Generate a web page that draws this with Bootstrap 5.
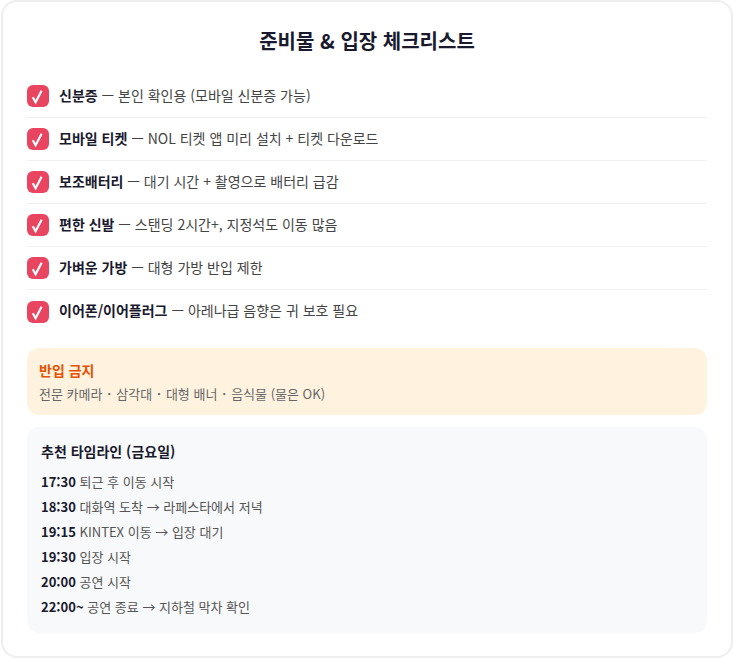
<!DOCTYPE html>
<html lang="ko"><head><meta charset="utf-8">
<link href="https://cdn.jsdelivr.net/npm/bootstrap@5.3.0/dist/css/bootstrap.min.css" rel="stylesheet">
<style>
html,body{height:100%;}
body{margin:0;background:#fff;font-family:"Noto Sans CJK KR","Noto Sans",sans-serif;color:#1a1a2e;overflow:hidden;}
.sheet{height:658px;margin:0 0 0 1px;width:732px;border:2px solid #eee;border-radius:16px;padding:24px;}
.ttl{font-size:20px;font-weight:700;text-align:center;line-height:29px;margin:0 0 20px;color:#1a1a2e;}
.chk{display:flex;align-items:center;gap:10px;height:43px;border-bottom:1px solid #f0f0f0;font-size:14px;color:#444;}
.chk:last-child{border-bottom:0;}
.chk b{color:#1a1a2e;font-weight:700;}
.chk-text{padding-bottom:2px;}
.tick{width:22px;height:22px;border-radius:6px;background:#e94560;color:#fff;display:flex;align-items:center;justify-content:center;flex:none;}
.warn{background:#fff3e0;border-radius:12px;padding:12px;margin-top:15px;height:67px;}
.warn h6{color:#e65100;font-size:14px;font-weight:700;margin:0 0 4px;line-height:20px;}
.warn p{font-size:13px;color:#666;margin:0;line-height:19px;}
.plan{background:#f8f9fa;border-radius:12px;padding:14px;margin-top:12px;height:206px;}
.plan h6{font-size:14px;font-weight:700;color:#1a1a2e;margin:0 0 8px;line-height:20px;}
.plan div{font-size:13px;color:#555;line-height:25px;}
.plan b{color:#1a1a2e;font-weight:700;}
</style></head><body>
<div class="sheet">
<h1 class="ttl">준비물 &amp; 입장 체크리스트</h1>
<div>
<div class="chk"><span class="tick"><svg width="22" height="22" viewBox="0 0 22 22"><path d="M5.8 12.2 8.6 17.2 14.6 5.8" fill="none" stroke="#fff" stroke-width="2.2"/></svg></span><span class="chk-text"><b>신분증</b> — 본인 확인용 (모바일 신분증 가능)</span></div>
<div class="chk"><span class="tick"><svg width="22" height="22" viewBox="0 0 22 22"><path d="M5.8 12.2 8.6 17.2 14.6 5.8" fill="none" stroke="#fff" stroke-width="2.2"/></svg></span><span class="chk-text"><b>모바일 티켓</b> — NOL 티켓 앱 미리 설치 + 티켓 다운로드</span></div>
<div class="chk"><span class="tick"><svg width="22" height="22" viewBox="0 0 22 22"><path d="M5.8 12.2 8.6 17.2 14.6 5.8" fill="none" stroke="#fff" stroke-width="2.2"/></svg></span><span class="chk-text"><b>보조배터리</b> — 대기 시간 + 촬영으로 배터리 급감</span></div>
<div class="chk"><span class="tick"><svg width="22" height="22" viewBox="0 0 22 22"><path d="M5.8 12.2 8.6 17.2 14.6 5.8" fill="none" stroke="#fff" stroke-width="2.2"/></svg></span><span class="chk-text"><b>편한 신발</b> — 스탠딩 2시간+, 지정석도 이동 많음</span></div>
<div class="chk"><span class="tick"><svg width="22" height="22" viewBox="0 0 22 22"><path d="M5.8 12.2 8.6 17.2 14.6 5.8" fill="none" stroke="#fff" stroke-width="2.2"/></svg></span><span class="chk-text"><b>가벼운 가방</b> — 대형 가방 반입 제한</span></div>
<div class="chk"><span class="tick"><svg width="22" height="22" viewBox="0 0 22 22"><path d="M5.8 12.2 8.6 17.2 14.6 5.8" fill="none" stroke="#fff" stroke-width="2.2"/></svg></span><span class="chk-text"><b>이어폰/이어플러그</b> — 아레나급 음향은 귀 보호 필요</span></div>
</div>
<div class="warn"><h6>반입 금지</h6><p>전문 카메라 ･ 삼각대 ･ 대형 배너 ･ 음식물 (물은 OK)</p></div>
<div class="plan"><h6>추천 타임라인 (금요일)</h6>
<div><b>17:30</b> 퇴근 후 이동 시작</div>
<div><b>18:30</b> 대화역 도착 → 라페스타에서 저녁</div>
<div><b>19:15</b> KINTEX 이동 → 입장 대기</div>
<div><b>19:30</b> 입장 시작</div>
<div><b>20:00</b> 공연 시작</div>
<div><b>22:00~</b> 공연 종료 → 지하철 막차 확인</div>
</div>
</div>
<script src="https://cdn.jsdelivr.net/npm/bootstrap@5.3.0/dist/js/bootstrap.bundle.min.js"></script>
</body></html>
